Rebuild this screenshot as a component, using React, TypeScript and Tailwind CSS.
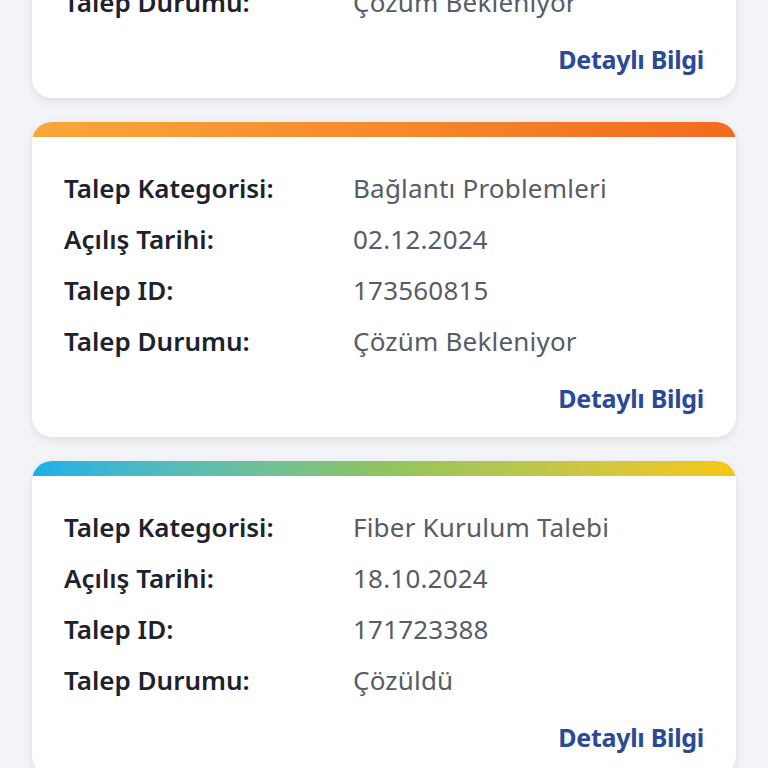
import React from 'react';

type Ticket = {
  category: string;
  date: string;
  id: string;
  status: string;
  strip: string;
};

const tickets: Ticket[] = [
  {
    category: 'Bağlantı Problemleri',
    date: '05.12.2024',
    id: '173712044',
    status: 'Çözüm Bekleniyor',
    strip: 'bg-gradient-to-r from-[#f9a63a] to-[#f26a1f]',
  },
  {
    category: 'Bağlantı Problemleri',
    date: '02.12.2024',
    id: '173560815',
    status: 'Çözüm Bekleniyor',
    strip: 'bg-gradient-to-r from-[#f9a63a] to-[#f26a1f]',
  },
  {
    category: 'Fiber Kurulum Talebi',
    date: '18.10.2024',
    id: '171723388',
    status: 'Çözüldü',
    strip: 'bg-gradient-to-r from-[#16b0ea] via-[#8fc45e] to-[#f7c70c]',
  },
];

function Row({ label, value }: { label: string; value: string }) {
  return (
    <div className="flex items-center h-[51px]">
      <span className="w-[289px] shrink-0 font-semibold text-[#1e222c] text-[26px]">{label}</span>
      <span className="text-[#575c66] text-[26px] tracking-[0.2px]">{value}</span>
    </div>
  );
}

function TicketCard({ t, first }: { t: Ticket; first?: boolean }) {
  return (
    <div
      className={`bg-white rounded-[20px] overflow-hidden shadow-[0_3px_10px_rgba(0,0,0,0.09)] ${first ? '-mt-[217px]' : ''}`}
    >
      <div className={`h-[15px] ${t.strip}`} />
      <div className="pl-8 pr-8 pt-[26px] pb-[13px]">
        <Row label="Talep Kategorisi:" value={t.category} />
        <Row label="Açılış Tarihi:" value={t.date} />
        <Row label="Talep ID:" value={t.id} />
        <Row label="Talep Durumu:" value={t.status} />
        <div className="flex justify-end mt-[6px]">
          <button className="text-[#2a4a97] font-bold text-[25px] h-[51px] tracking-[-0.3px]">Detaylı Bilgi</button>
        </div>
      </div>
    </div>
  );
}

export default function App() {
  return (
    <div
      className="w-[768px] h-[768px] overflow-hidden bg-[#f3f4f7] px-8"
      style={{ fontFamily: '"Noto Sans", sans-serif' }}
    >
      <div className="flex flex-col gap-6">
        {tickets.map((t, i) => (
          <TicketCard key={i} t={t} first={i === 0} />
        ))}
      </div>
    </div>
  );
}
